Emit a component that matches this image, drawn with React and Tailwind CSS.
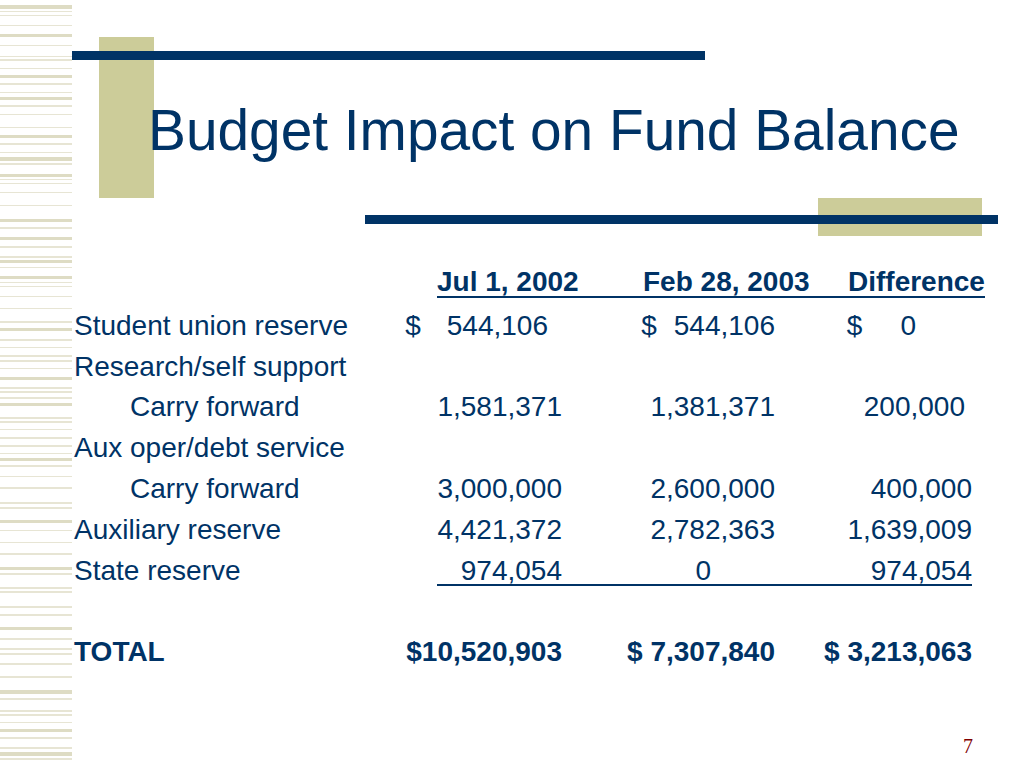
const STRIPES = [
  [5, 4], [11, 1], [15, 1], [25, 1], [34, 3], [45, 1], [56, 1], [59, 2], [68, 1], [75, 3],
  [83, 2], [92, 1], [97, 3], [105, 2], [114, 1], [127, 1], [135, 3], [143, 2], [152, 1], [157, 4],
  [163, 2], [174, 3], [179, 1], [183, 1], [192, 1], [205, 1], [219, 3], [227, 2], [237, 3], [246, 2],
  [256, 2], [260, 3], [267, 1], [276, 3], [282, 1], [286, 1], [296, 1], [308, 1], [321, 2], [328, 3],
  [339, 2], [347, 1], [355, 2], [360, 2], [368, 1], [377, 3], [387, 2], [391, 2], [397, 2], [403, 3],
  [417, 2], [421, 2], [429, 1], [437, 2], [445, 2], [453, 1], [458, 3], [465, 2], [476, 1], [487, 2],
  [502, 2], [507, 2], [520, 3], [530, 1], [542, 1], [553, 2], [567, 3], [573, 2], [587, 2], [591, 2],
  [606, 2], [614, 2], [627, 3], [638, 2], [648, 2], [653, 2], [663, 2], [676, 2], [690, 4], [698, 2],
  [710, 2], [714, 2], [722, 1], [729, 3], [737, 2], [747, 2], [752, 4], [758, 2],
];

function Stripes() {
  return (
    <svg width="72" height="768" viewBox="0 0 72 768" className="block">
      {STRIPES.map(([y, h], i) => (
        <rect key={i} x="0" y={y} width="72" height={h} fill={h >= 3 ? '#dedcc4' : '#e7e5d4'} />
      ))}
    </svg>
  );
}

// number cells, right edges at 562 / 775 / 972
function Cell({ w, children }) {
  return <div className={`flex shrink-0 justify-end whitespace-nowrap ${w}`}>{children}</div>;
}

function Row({ label, indent, bold, a, b, c, rule }) {
  return (
    <div className={`flex leading-[40.8px] ${bold ? 'font-bold' : ''}`}>
      <div className={`w-[363px] shrink-0 whitespace-nowrap ${indent ? 'pl-[56px]' : ''}`}>{label}</div>
      <div
        className={`flex ${
          rule ? 'bg-[linear-gradient(#003366,#003366)] bg-no-repeat bg-[length:100%_2px] bg-[position:0_33px]' : ''
        }`}
      >
        <Cell w="w-[125px]">{a}</Cell>
        <Cell w="w-[213px]">{b}</Cell>
        <Cell w="w-[197px]">{c}</Cell>
      </div>
    </div>
  );
}

export default function App() {
  return (
    <div className="flex w-[1024px] h-[768px] bg-white overflow-hidden font-['Liberation_Sans',Arial,sans-serif] text-[#003366]">
      <aside className="w-[72px] shrink-0">
        <Stripes />
      </aside>

      <main className="relative flex-1 flex flex-col">
        {/* template decorations */}
        <div className="absolute left-[27px] top-[37px] w-[55px] h-[161px] bg-[#cccc99]" />
        <div className="absolute left-0 top-[51px] w-[633px] h-[9px] bg-[#003366]" />
        <div className="absolute left-[746px] top-[198px] w-[164px] h-[38px] bg-[#cccc99]" />
        <div className="absolute left-[293px] top-[215px] w-[633px] h-[9px] bg-[#003366]" />

        <h1 className="relative mt-[102px] ml-[76px] text-[56.8px] leading-[57px] font-normal whitespace-nowrap">
          Budget Impact on Fund Balance
        </h1>

        <section className="relative mt-[103px] ml-[2px] text-[28px]">
          <div className="ml-[363px] mb-[3px] flex w-[548px] font-bold leading-[40.8px] whitespace-nowrap bg-[linear-gradient(#003366,#003366)] bg-no-repeat bg-[length:100%_2px] bg-[position:0_34px]">
            <span className="w-[206px] shrink-0">Jul 1, 2002</span>
            <span className="w-[205px] shrink-0">Feb 28, 2003</span>
            <span>Difference</span>
          </div>

          <Row
            label="Student union reserve"
            a={<><span>$</span><span className="ml-[26px] mr-[14px]">544,106</span></>}
            b={<><span>$</span><span className="ml-[17px]">544,106</span></>}
            c={<><span>$</span><span className="ml-[38px] mr-[56px]">0</span></>}
          />
          <Row label="Research/self support" />
          <Row
            label="Carry forward"
            indent
            a="1,581,371"
            b="1,381,371"
            c={<span className="mr-[7px]">200,000</span>}
          />
          <Row label="Aux oper/debt service" />
          <Row label="Carry forward" indent a="3,000,000" b="2,600,000" c="400,000" />
          <Row label="Auxiliary reserve" a="4,421,372" b="2,782,363" c="1,639,009" />
          <Row
            label="State reserve"
            rule
            a="974,054"
            b={<span className="mr-[64px]">0</span>}
            c="974,054"
          />
          <Row label={'\u00a0'} />
          <Row label="TOTAL" bold a="$10,520,903" b="$ 7,307,840" c="$ 3,213,063" />
        </section>

        <div className="mt-auto self-end pr-[51px] pb-[12px] font-['Liberation_Serif','Times_New_Roman',serif] text-[20px] leading-[20px] text-[#800000]">
          7
        </div>
      </main>
    </div>
  );
}
